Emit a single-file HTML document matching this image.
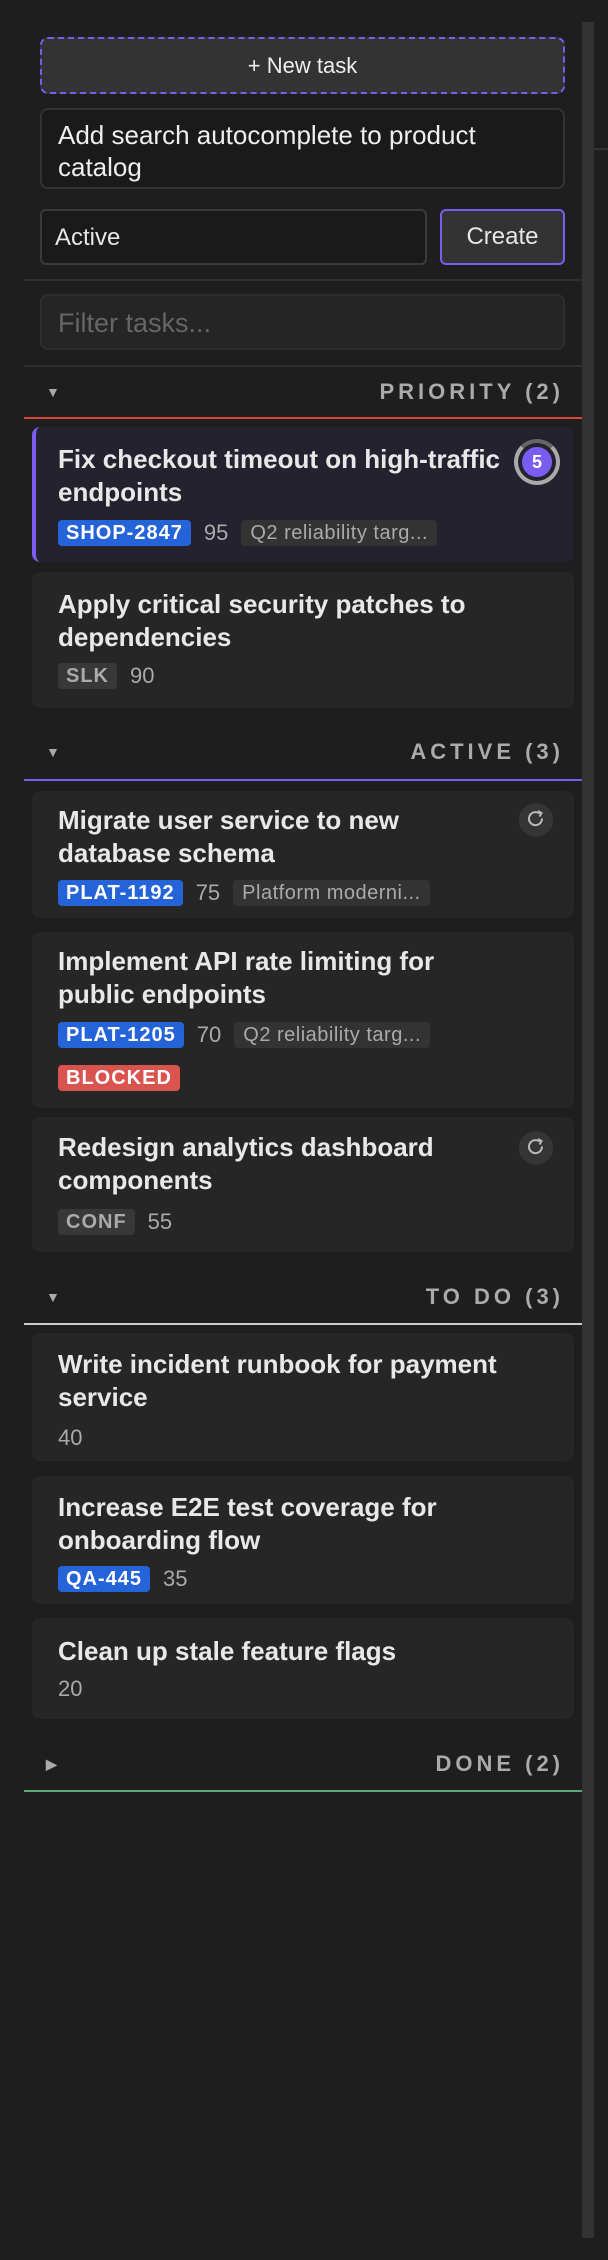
<!DOCTYPE html>
<html><head><style>
*{box-sizing:border-box;margin:0;padding:0}
body{width:608px;height:2260px;background:#1e1e1e;position:relative;overflow:hidden;font-family:"Liberation Sans",sans-serif;color:#e6e6e6}
.a{position:absolute}
.btn{left:40px;width:525px;top:37px;height:57px;border:2px dashed #7b5cf0;border-radius:8px;background:#333;color:#eee;font-size:22px;display:flex;align-items:center;justify-content:center}
.ta{left:40px;width:525px;top:108px;height:81px;border:2px solid #333;border-radius:8px;background:#1a1a1a;font-size:26px;line-height:32px;padding:9px 0 0 16px;color:#eee;white-space:nowrap}
.sel{left:40px;width:387px;top:209px;height:56px;border:2px solid #3a3a3a;border-radius:6px;background:#1a1a1a;font-size:24px;padding:13px 0 0 13px}
.cr{left:440px;width:125px;top:209px;height:56px;border:2px solid #7b5cf0;border-radius:6px;background:#333;font-size:24px;display:flex;align-items:center;justify-content:center}
.div{left:24px;width:558px;height:2px;background:#2e2e2e}
.flt{left:40px;width:525px;top:294px;height:56px;border:2px solid #2e2e2e;border-radius:8px;background:#252525;font-size:27px;color:#666;padding:12px 0 0 16px}
.hd{left:24px;width:558px;height:30px;font-size:22px;font-weight:bold;letter-spacing:4px;color:#aaa;text-align:right;padding-right:18px;line-height:30px}
.tri{position:absolute;left:22px;top:0;font-size:14px;color:#aaa;letter-spacing:0}
.ln{left:24px;width:558px;height:2px}
.card{left:32px;width:542px;background:#262626;border-radius:8px}
.t{position:absolute;left:26px;font-size:26px;line-height:33px;font-weight:bold;color:#e8e8e8;white-space:nowrap}
.row{position:absolute;left:26px;display:flex;align-items:center;gap:13px;height:26px}
.tg{height:26px;line-height:26px;padding:0 8px;border-radius:4px;font-size:20px;font-weight:bold;letter-spacing:1px}
.b{background:#2563d9;color:#fff}.g{background:#383838;color:#aaa}.r{background:#d9534f;color:#fff}
.n{font-size:22px;color:#aaa}
.ep{background:#333;color:#aaa;font-size:20px;height:26px;line-height:26px;padding:0 9px;border-radius:4px;letter-spacing:.5px}
</style></head><body>
<div class="a" style="left:582px;top:22px;width:12px;height:2216px;background:#333"></div>
<div class="a" style="left:594px;top:148px;width:14px;height:2px;background:#333"></div>
<div class="a btn">+ New task</div>
<div class="a ta">Add search autocomplete to product<br>catalog</div>
<div class="a sel">Active</div>
<div class="a cr">Create</div>
<div class="a div" style="top:279px"></div>
<div class="a flt">Filter tasks...</div>
<div class="a div" style="top:365px"></div>

<div class="a hd" style="top:377px"><span class="tri">▼</span>PRIORITY (2)</div>
<div class="a ln" style="top:417px;background:#d9443c"></div>
<div class="a card" style="top:427px;height:135px;background:#25222f;border-left:4px solid #7b5cf0">
<div class="t" style="top:16px;left:22px">Fix checkout timeout on high-traffic<br>endpoints</div>
<div class="row" style="top:93px;left:22px"><span class="tg b">SHOP-2847</span><span class="n">95</span><span class="ep">Q2 reliability targ...</span></div>
<div style="position:absolute;left:478px;top:12px;width:46px;height:46px;border-radius:50%;border:4px solid #aaa;border-top-color:#666"></div>
<div style="position:absolute;left:486px;top:20px;width:30px;height:30px;border-radius:50%;background:#7b5cf0;color:#fff;font-weight:bold;font-size:18px;text-align:center;line-height:30px">5</div>
</div>
<div class="a card" style="top:572px;height:136px">
<div class="t" style="top:16px">Apply critical security patches to<br>dependencies</div>
<div class="row" style="top:91px"><span class="tg g">SLK</span><span class="n">90</span></div>
</div>

<div class="a hd" style="top:737px"><span class="tri">▼</span>ACTIVE (3)</div>
<div class="a ln" style="top:779px;background:#7b5cf0"></div>
<div class="a card" style="top:791px;height:127px">
<div class="t" style="top:13px">Migrate user service to new<br>database schema</div>
<div class="row" style="top:89px"><span class="tg b">PLAT-1192</span><span class="n">75</span><span class="ep">Platform moderni...</span></div>
</div>
<div class="a card" style="top:932px;height:176px">
<div class="t" style="top:13px">Implement API rate limiting for<br>public endpoints</div>
<div class="row" style="top:90px"><span class="tg b">PLAT-1205</span><span class="n">70</span><span class="ep">Q2 reliability targ...</span></div>
<div class="row" style="top:133px"><span class="tg r">BLOCKED</span></div>
</div>
<div class="a card" style="top:1117px;height:135px">
<div class="t" style="top:14px">Redesign analytics dashboard<br>components</div>
<div class="row" style="top:92px"><span class="tg g">CONF</span><span class="n">55</span></div>
</div>
<svg class="a" style="left:518px;top:802px" width="36" height="36" viewBox="0 0 36 36"><circle cx="18" cy="18" r="17" fill="#353535"/><path d="M24 16.5a6.5 6.5 0 1 1-2.5-5" fill="none" stroke="#bbb" stroke-width="2"/><path d="M20 9l3.5 2-2 3.5" fill="none" stroke="#bbb" stroke-width="2"/></svg>
<svg class="a" style="left:518px;top:1130px" width="36" height="36" viewBox="0 0 36 36"><circle cx="18" cy="18" r="17" fill="#353535"/><path d="M24 16.5a6.5 6.5 0 1 1-2.5-5" fill="none" stroke="#bbb" stroke-width="2"/><path d="M20 9l3.5 2-2 3.5" fill="none" stroke="#bbb" stroke-width="2"/></svg>

<div class="a hd" style="top:1282px"><span class="tri">▼</span>TO DO (3)</div>
<div class="a ln" style="top:1323px;background:#ccc"></div>
<div class="a card" style="top:1333px;height:128px">
<div class="t" style="top:15px">Write incident runbook for payment<br>service</div>
<div class="row" style="top:92px"><span class="n">40</span></div>
</div>
<div class="a card" style="top:1476px;height:128px">
<div class="t" style="top:15px">Increase E2E test coverage for<br>onboarding flow</div>
<div class="row" style="top:90px"><span class="tg b">QA-445</span><span class="n">35</span></div>
</div>
<div class="a card" style="top:1618px;height:101px">
<div class="t" style="top:17px">Clean up stale feature flags</div>
<div class="row" style="top:58px"><span class="n">20</span></div>
</div>

<div class="a hd" style="top:1749px"><span class="tri">▶</span>DONE (2)</div>
<div class="a ln" style="top:1790px;background:#5fa878"></div>
</body></html>
